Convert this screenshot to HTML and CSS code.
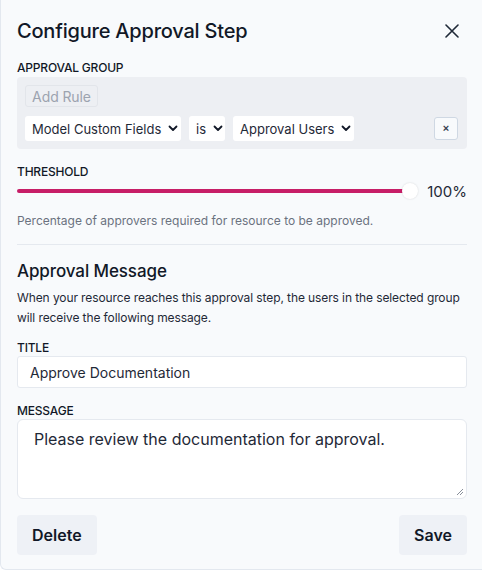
FILE: index.html
```html
<!DOCTYPE html>
<html>
<head>
<meta charset="utf-8">
<link rel="stylesheet" href="styles.css">
</head>
<body>
<div class="panel">
  <div class="header">
    <h1 class="title">Configure Approval Step</h1>
    <button class="close" aria-label="Close">
      <svg width="14" height="14" viewBox="0 0 14 14"><path d="M1 1L13 13M13 1L1 13" stroke="#1f2937" stroke-width="1.6" stroke-linecap="round"/></svg>
    </button>
  </div>

  <div class="label">APPROVAL GROUP</div>
  <div class="group">
    <button class="add-rule" disabled>Add Rule</button>
    <div class="rule">
      <div class="select sel-field">Model Custom Fields <span class="chev"><svg width="10" height="7" viewBox="0 0 10 7"><path d="M1.5 1.5L5 5L8.5 1.5" stroke="#111827" stroke-width="1.8" fill="none" stroke-linecap="round" stroke-linejoin="round"/></svg></span></div>
      <div class="select sel-op">is <span class="chev"><svg width="10" height="7" viewBox="0 0 10 7"><path d="M1.5 1.5L5 5L8.5 1.5" stroke="#111827" stroke-width="1.8" fill="none" stroke-linecap="round" stroke-linejoin="round"/></svg></span></div>
      <div class="select sel-val">Approval Users <span class="chev"><svg width="10" height="7" viewBox="0 0 10 7"><path d="M1.5 1.5L5 5L8.5 1.5" stroke="#111827" stroke-width="1.8" fill="none" stroke-linecap="round" stroke-linejoin="round"/></svg></span></div>
      <button class="remove">×</button>
    </div>
  </div>

  <div class="label label-threshold">THRESHOLD</div>
  <div class="slider-row">
    <div class="track"><div class="thumb"></div></div>
    <span class="pct">100%</span>
  </div>
  <p class="help">Percentage of approvers required for resource to be approved.</p>

  <hr class="divider">

  <h2 class="subtitle">Approval Message</h2>
  <p class="desc">When your resource reaches this approval step, the users in the selected group will receive the following message.</p>

  <div class="label label-title">TITLE</div>
  <div class="input">Approve Documentation</div>

  <div class="label label-message">MESSAGE</div>
  <div class="textarea">Please review the documentation for approval.
    <svg class="grip" width="8" height="8" viewBox="0 0 8 8"><path d="M7 1L1 7M7 4L4 7" stroke="#6b7280" stroke-width="0.8"/></svg>
  </div>

  <div class="actions">
    <button class="btn">Delete</button>
    <button class="btn">Save</button>
  </div>
</div>
</body>
</html>
```
FILE: styles.css
```css
* { box-sizing: border-box; }
html, body { margin: 0; padding: 0; background: #ffffff; }
body {
  font-family: Inter, "Noto Sans", sans-serif;
  color: #111827;
  width: 482px;
  height: 571px;
  overflow: hidden;
}
.panel {
  width: 482px;
  height: 570px;
  background: #f8fafc;
  border-left: 1px solid #e3e8ef;
  border-bottom: 1px solid #e3e8ef;
  border-bottom-left-radius: 6px;
  padding: 0 15px 0 16px;
}
.header {
  display: flex;
  align-items: center;
  justify-content: space-between;
  height: 60px;
  padding-top: 1px;
}
.title {
  margin: 0;
  font-size: 20px;
  font-weight: 500;
  letter-spacing: -0.2px;
  color: #111827;
}
.close {
  border: none;
  background: transparent;
  padding: 0;
  margin-right: 8px;
  width: 14px;
  height: 14px;
  display: flex;
}
.label {
  font-size: 12px;
  font-weight: 500;
  color: #111827;
  line-height: 16px;
  letter-spacing: -0.2px;
}
.group {
  margin-top: 1px;
  background: #edeff3;
  border-radius: 4px;
  height: 72px;
  padding: 8px 9px 0 8px;
}
.add-rule {
  font-family: inherit;
  font-size: 14px;
  color: #9ca3af;
  background: #edeff3;
  border: 1px solid #e2e5ea;
  border-radius: 3px;
  height: 22px;
  width: 73px;
  padding: 0;
  display: block;
  letter-spacing: -0.1px;
}
.rule {
  display: flex;
  align-items: center;
  margin-top: 9px;
  gap: 8px;
}
.select {
  background: #ffffff;
  border-radius: 3px;
  height: 25px;
  font-size: 13px;
  display: flex;
  align-items: center;
  padding-left: 7px;
  color: #1f2937;
  white-space: nowrap;
}
.chev { display: flex; margin-left: 7px; }
.sel-field { width: 156px; }
.sel-op { width: 36px; }
.sel-val { width: 121px; }
.remove {
  margin-left: auto;
  width: 24px;
  height: 23px;
  background: #f8fafc;
  border: 1px solid #cfd8e3;
  border-radius: 3px;
  font-size: 11px;
  font-weight: 700;
  color: #374151;
  padding: 0;
  line-height: 1;
}
.label-threshold { margin-top: 15px; }
.slider-row {
  display: flex;
  align-items: center;
  height: 22px;
  margin-top: 0;
}
.track {
  position: relative;
  width: 393px;
  height: 4px;
  background: #c71d67;
  border-radius: 2px;
}
.thumb {
  position: absolute;
  right: -8px;
  top: -6px;
  width: 16px;
  height: 16px;
  border-radius: 50%;
  background: #ffffff;
  box-shadow: 0 0 2px rgba(0,0,0,0.15);
}
.pct {
  margin-left: auto;
  font-size: 15px;
  color: #1f2937;
}
.help {
  margin: 11px 0 0;
  font-size: 12px;
  line-height: 16px;
  color: #6b7280;
}
.divider {
  border: none;
  border-top: 1px solid #e5e9ef;
  margin: 15px 0 0;
}
.subtitle {
  margin: 14px 0 0;
  font-size: 17px;
  font-weight: 500;
  line-height: 24px;
  color: #111827;
  letter-spacing: -0.1px;
}
.desc {
  margin: 5px 0 0;
  font-size: 12px;
  line-height: 20px;
  color: #1f2937;
  letter-spacing: -0.1px;
}
.label-title { margin-top: 12px; }
.input {
  margin-top: 0;
  height: 32px;
  background: #ffffff;
  border: 1px solid #e5e9ef;
  border-radius: 3px;
  font-size: 14px;
  display: flex;
  align-items: center;
  padding-left: 12px;
  color: #1f2937;
}
.label-message { margin-top: 15px; }
.textarea {
  position: relative;
  margin-top: 0;
  height: 80px;
  background: #ffffff;
  border: 1px solid #e5e9ef;
  border-radius: 6px;
  font-size: 16px;
  line-height: 22px;
  padding: 8px 16px;
  color: #1f2937;
}
.grip { position: absolute; right: 2px; bottom: 2px; }
.actions {
  display: flex;
  justify-content: space-between;
  margin-top: 16px;
}
.btn {
  font-family: inherit;
  font-size: 16px;
  font-weight: 600;
  color: #111827;
  background: #eef1f6;
  border: none;
  border-radius: 4px;
  height: 40px;
  padding: 0 15px;
}
```
